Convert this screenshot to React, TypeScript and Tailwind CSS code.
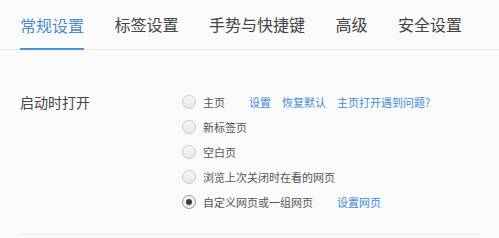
import React from "react";

const tabs = ["常规设置", "标签设置", "手势与快捷键", "高级", "安全设置"];

type Option = { label: string; checked?: boolean; links?: string[] };

const options: Option[] = [
  { label: "主页", links: ["设置", "恢复默认", "主页打开遇到问题?"] },
  { label: "新标签页" },
  { label: "空白页" },
  { label: "浏览上次关闭时在看的网页" },
  { label: "自定义网页或一组网页", checked: true, links: ["设置网页"] },
];

function Radio({ checked }: { checked?: boolean }) {
  return (
    <span
      className={`flex h-[14px] w-[14px] shrink-0 items-center justify-center rounded-full border bg-gradient-to-b from-[#f7f7f7] to-[#e8e8e8] ${
        checked ? "border-[#9a9a9a]" : "border-[#c9c9c9]"
      }`}
    >
      {checked && <span className="h-[6px] w-[6px] rounded-full bg-[#3c3c3c]" />}
    </span>
  );
}

export default function App() {
  return (
    <div className="h-[238px] w-[499px] overflow-hidden bg-[#fafafa] font-['Noto_Sans_CJK_SC','Noto_Sans',sans-serif]">
      {/* Tabs */}
      <div className="flex h-[50px] gap-[30.5px] border-b border-[#e9e9e9] pl-5">
        {tabs.map((t, i) => (
          <div
            key={t}
            className={`-mb-px flex items-center pb-[4px] text-[16px] leading-none ${
              i === 0 ? "border-b-2 border-[#4a90d6] pt-[6px] text-[#4a8ad0]" : "pt-[2px] text-[#444]"
            }`}
          >
            {t}
          </div>
        ))}
      </div>

      {/* Startup section */}
      <div className="mx-5 mt-[39.5px] flex border-b border-[#ececec] pb-[19px]">
        <div className="flex h-[25px] w-[162px] shrink-0 items-center text-[14px] leading-none text-[#444]">
          启动时打开
        </div>
        <div className="flex flex-col">
          {options.map((o) => (
            <div key={o.label} className="flex h-[25px] items-center text-[11px] leading-none">
              <Radio checked={o.checked} />
              <span className="ml-[7px] text-[#555]">{o.label}</span>
              {o.links && (
                <div className="ml-[24px] flex gap-[11px]">
                  {o.links.map((l) => (
                    <span key={l} className="text-[#3d8bd6]">
                      {l}
                    </span>
                  ))}
                </div>
              )}
            </div>
          ))}
        </div>
      </div>
    </div>
  );
}
